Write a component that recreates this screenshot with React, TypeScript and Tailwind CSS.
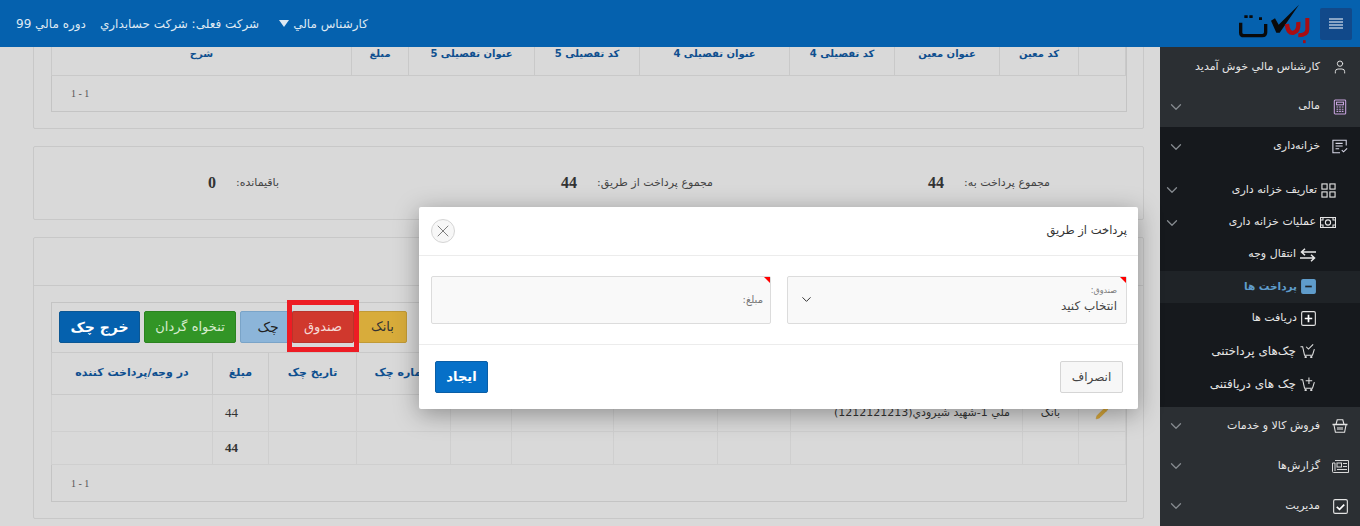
import React from "react";
import { User, ChevronDown, X, Pencil } from "lucide-react";

const fa = "font-['DejaVu_Sans','Liberation_Sans',sans-serif]";

function Logo() {
  return (
    <svg width="75" height="47" viewBox="30 0 225 141" fill="none" className="shrink-0">
      <path d="M47 68V98Q47 107 57 107H112Q122 107 122 97V72" stroke="#0a0a0a" strokeWidth="10" />
      <path d="M58 50h10M73 50h10M102 56h9" stroke="#0a0a0a" strokeWidth="8" />
      <path d="M138 62L150 55L161 74L222 14L164 98H154Z" fill="#0a0a0a" />
      <path d="M186 72Q188 102 206 98Q222 94 220 66" stroke="#a80d12" strokeWidth="13" />
      <path d="M247 54V88Q247 106 220 106" stroke="#a80d12" strokeWidth="12" />
      <path d="M234 125h8" stroke="#a80d12" strokeWidth="9" />
    </svg>
  );
}

const ic = "w-[16px] h-[16px] shrink-0";

function CalcIcon() {
  return (
    <svg viewBox="0 0 16 18" className="w-[14px] h-[16px] shrink-0" fill="none" stroke="#c9a4e0" strokeWidth="1.2">
      <rect x="1.5" y="1" width="13" height="16" rx="1" />
      <rect x="4" y="3.5" width="8" height="3" />
      <path d="M4 9h2M7 9h2M10 9h2M4 11.5h2M7 11.5h2M10 11.5h2M4 14h2M7 14h2M10 14h2" />
    </svg>
  );
}
function TreasuryIcon() {
  return (
    <svg viewBox="0 0 18 16" className="w-[16px] h-[15px] shrink-0" fill="none" stroke="#d8d8e8" strokeWidth="1.2">
      <path d="M16 7V1H1v14h8" />
      <path d="M4 4.5h8M4 7.5h8M4 10.5h4" />
      <path d="M11 12l2 2 4-4" />
    </svg>
  );
}
function GridIcon() {
  return (
    <svg viewBox="0 0 16 16" className="w-[15px] h-[15px] shrink-0" fill="none" stroke="#e4e4e4" strokeWidth="1.2">
      <rect x="1" y="1" width="5.5" height="5.5" />
      <rect x="9.5" y="1" width="5.5" height="5.5" />
      <rect x="1" y="9.5" width="5.5" height="5.5" />
      <rect x="9.5" y="9.5" width="5.5" height="5.5" />
    </svg>
  );
}
function MoneyIcon() {
  return (
    <svg viewBox="0 0 16 11" className="w-[16px] h-[11px] shrink-0" fill="none" stroke="#e4e4e4" strokeWidth="1.1">
      <rect x="0.5" y="0.5" width="15" height="10" />
      <circle cx="8" cy="5.5" r="2.6" />
      <path d="M1 3h2V1M13 1v2h2M1 8h2v2M13 10V8h2" />
    </svg>
  );
}
function SwapIcon() {
  return (
    <svg viewBox="0 0 16 14" className="w-[16px] h-[14px] shrink-0" fill="none" stroke="#e8e8e8" strokeWidth="1.5">
      <path d="M16 4H1.5M5 0.7L1.5 4L5 7.3" />
      <path d="M0 10H14.5M11 6.7L14.5 10L11 13.3" />
    </svg>
  );
}
function BoxIcon({ kind, active }: { kind: "minus" | "plus" | "check"; active?: boolean }) {
  const stroke = active ? "#5f9ccb" : "#e4e4e4";
  return (
    <svg viewBox="0 0 16 16" className="w-[15px] h-[15px] shrink-0" fill={active ? "#5f9ccb" : "none"} stroke={stroke} strokeWidth="1.2">
      <rect x="0.7" y="0.7" width="14.6" height="14.6" rx="1.5" />
      {kind === "minus" && <path d="M4.5 8h7" stroke="#1f2327" strokeWidth="1.8" />}
      {kind === "plus" && <path d="M4 8h8M8 4v8" stroke="#fff" strokeWidth="1.8" />}
      {kind === "check" && <path d="M4 8.5l3 2.5 5-5" stroke="#fff" strokeWidth="1.8" />}
    </svg>
  );
}
function CartIcon({ kind }: { kind: "check" | "plus" }) {
  return (
    <svg viewBox="0 0 17 16" className="w-[16px] h-[15px] shrink-0" fill="none" stroke="#e4e4e4" strokeWidth="1.1">
      <path d="M0.5 4h2.3l2 9h8.5l2-6.5" />
      <circle cx="6" cy="15" r="0.7" />
      <circle cx="12" cy="15" r="0.7" />
      {kind === "check" ? <path d="M6.5 4l2.5 2.5L14 1.5" /> : <path d="M6 5h7M9.5 1.5v7" />}
    </svg>
  );
}
function BasketIcon() {
  return (
    <svg viewBox="0 0 16 14" className="w-[16px] h-[14px] shrink-0" fill="none" stroke="#e4e4e4" strokeWidth="1.1">
      <path d="M4 5.5L5.2 0.8H10.8L12 5.5" />
      <path d="M0.5 5.5H15.5" strokeWidth="1.5" />
      <path d="M2 6L3.4 13.3H12.6L14 6" />
      <path d="M6 8v3M8 8v3M10 8v3" />
    </svg>
  );
}
function PaperIcon() {
  return (
    <svg viewBox="0 0 17 13" className="w-[17px] h-[13px] shrink-0" fill="none" stroke="#d8d8d8" strokeWidth="1">
      <path d="M3 0.5H16.5V12.5H1.5Q0.5 12.5 0.5 11.5V3H3V11" />
      <rect x="5" y="3" width="4.5" height="4" />
      <path d="M11 3.5h4M11 6.5h4M5 9.5h10" />
    </svg>
  );
}

function Chev() {
  return <ChevronDown className="w-[18px] h-[18px] text-[#858a8f] shrink-0" strokeWidth={1.7} />;
}

function TopRow({ icon, label, dark, h = "h-[40px]" }: { icon: React.ReactNode; label: string; dark?: boolean; h?: string }) {
  return (
    <div className={`${h} flex items-center pr-[12px] pl-[7px] gap-[12px] text-[11px] text-[#e6e6e6] ${dark ? "bg-[#16191d]" : ""}`}>
      <span className="w-[16px] flex justify-center">{icon}</span>
      <span className="flex-1">{label}</span>
      <Chev />
    </div>
  );
}

function SubRow({ icon, label, chevron, h = "h-[32px]" }: { icon: React.ReactNode; label: string; chevron?: boolean; h?: string }) {
  return (
    <div className={`${h} flex items-center pr-[24px] pl-[3px] gap-[4px] text-[11px] text-[#e6e6e6]`}>
      {icon}
      <span className="flex-1">{label}</span>
      {chevron && <Chev />}
    </div>
  );
}

function LeafRow({ icon, label, active, large, h = "h-[32px]" }: { icon: React.ReactNode; label: string; active?: boolean; large?: boolean; h?: string }) {
  return (
    <div className={`${h} flex items-center pr-[44px] gap-[4px] ${active ? "bg-[#1f2327] text-[#5f9ccb] font-bold text-[10.5px]" : large ? "text-[#e6e6e6] text-[12px]" : "text-[#e6e6e6] text-[11px]"}`}>
      {icon}
      <span>{label}</span>
    </div>
  );
}

function Sidebar() {
  return (
    <aside className="w-[200px] shrink-0 bg-[#2b2f33] flex flex-col overflow-hidden">
      <div className="h-[40px] flex items-center pr-[12px] gap-[12px] text-[11px] text-[#e6e6e6]">
        <User className={ic} strokeWidth={1.4} />
        <span>کارشناس مالي خوش آمدید</span>
      </div>
      <TopRow icon={<CalcIcon />} label="مالی" />
      <div className="bg-[#16191d] pb-[6px]">
        <TopRow icon={<TreasuryIcon />} label="خزانه‌داری" dark />
        <div className="pt-[7px]">
          <SubRow h="h-[33px]" icon={<GridIcon />} label="تعاریف خزانه داری" chevron />
          <SubRow icon={<MoneyIcon />} label="عملیات خزانه داری" chevron />
          <LeafRow icon={<SwapIcon />} label="انتقال وجه" />
          <LeafRow icon={<BoxIcon kind="minus" active />} label="پرداخت ها" active />
          <LeafRow icon={<BoxIcon kind="plus" />} label="دریافت ها" />
          <LeafRow large icon={<CartIcon kind="check" />} label="چک‌های پرداختنی" />
          <LeafRow large h="h-[34px]" icon={<CartIcon kind="plus" />} label="چک های دریافتنی" />
        </div>
      </div>
      <TopRow icon={<BasketIcon />} label="فروش کالا و خدمات" />
      <TopRow icon={<PaperIcon />} label="گزارش‌ها" />
      <TopRow icon={<BoxIcon kind="check" />} label="مدیریت" />
    </aside>
  );
}

function Header() {
  return (
    <header className="h-[47px] shrink-0 bg-[#0561ae] flex items-center pr-[8px] pl-[16px] text-[12px] text-[#dfe9f3]">
      <button className="w-[32px] h-[32px] rounded-[2px] bg-[#11498a] flex items-center justify-center">
        <svg width="14" height="11" viewBox="0 0 14 11" stroke="#fff" strokeWidth="1.1">
          <path d="M0 1h14M0 4h14M0 7h14M0 10h14" />
        </svg>
      </button>
      <div className="mr-[10px]"><Logo /></div>
      <div className="mr-auto flex items-center gap-[14px]">
        <span className="flex items-center gap-[4px]">
          کارشناس مالي
          <span className="w-0 h-0 border-l-[5px] border-r-[5px] border-t-[7px] border-l-transparent border-r-transparent border-t-[#dfe9f3]" />
        </span>
        <span className="mr-[6px]">شرکت فعلی: شرکت حسابداري</span>
        <span>دوره مالي 99</span>
      </div>
    </header>
  );
}

function Th({ children, size }: { children?: React.ReactNode; size: string }) {
  return <th className={`border border-[#c9c9c9] font-bold ${size} text-[#0e4f8f] text-center align-middle`}>{children}</th>;
}
function Pager() {
  return <div className="h-full flex items-center pl-[19px] font-['Liberation_Serif',serif] text-[10px] text-[#555]" dir="ltr"><span>1 - 1</span></div>;
}

function TopTable() {
  const heads = ["", "کد معین", "عنوان معین", "کد تفصیلی 4", "عنوان تفصیلی 4", "کد تفصیلی 5", "عنوان تفصیلی 5", "مبلغ", "شرح"];
  return (
    <div className="border border-[#c4c4c4]">
      <table className="w-full table-fixed border-collapse">
        <colgroup>
          <col className="w-[47px]" /><col className="w-[79px]" /><col className="w-[105px]" /><col className="w-[105px]" />
          <col className="w-[150px]" /><col className="w-[105px]" /><col className="w-[126px]" /><col className="w-[57px]" /><col className="w-[300px]" />
        </colgroup>
        <thead>
          <tr className="h-[44px]">{heads.map((h, i) => <Th key={i} size="text-[10px]">{h}</Th>)}</tr>
        </thead>
      </table>
      <div className="h-[35px]"><Pager /></div>
    </div>
  );
}

function Td({ children, amount, bold, right }: { children?: React.ReactNode; amount?: boolean; bold?: boolean; right?: boolean }) {
  return (
    <td className={`border border-[#cfcfcf] text-[#333] align-middle ${right ? "text-right pr-[12px] text-[11px]" : amount ? "text-left pl-[12px] text-[13px] font-['Liberation_Serif',serif]" : "text-center text-[11px]"} ${bold ? "font-bold" : ""}`}>
      {children}
    </td>
  );
}

function BottomTable() {
  const heads = ["", "", "", "", "", "", "", "شماره چک", "تاریخ چک", "مبلغ", "در وجه/پرداخت کننده"];
  return (
    <table className="w-full table-fixed border-collapse">
      <colgroup>
        <col className="w-[47px]" /><col className="w-[56px]" /><col className="w-[232px]" /><col className="w-[73px]" /><col className="w-[104px]" />
        <col className="w-[102px]" /><col className="w-[61px]" /><col className="w-[94px]" /><col className="w-[88px]" /><col className="w-[56px]" /><col className="w-[161px]" />
      </colgroup>
      <thead>
        <tr className="h-[42px]">{heads.map((h, i) => <Th key={i} size="text-[11px]">{h}</Th>)}</tr>
      </thead>
      <tbody>
        <tr className="h-[37px]">
          <Td><Pencil className="w-[14px] h-[14px] text-[#c9962a] mx-auto" fill="#d9a93a" strokeWidth={1} /></Td>
          <Td>بانک</Td>
          <Td right>ملي 1-شهيد شيرودي(1212121213)</Td>
          <Td /><Td /><Td /><Td /><Td /><Td />
          <Td amount>44</Td>
          <Td />
        </tr>
        <tr className="h-[33px]">
          <Td /><Td /><Td /><Td /><Td /><Td /><Td /><Td /><Td />
          <Td amount bold>44</Td>
          <Td />
        </tr>
      </tbody>
    </table>
  );
}

function Btn({ c, children }: { c: string; children: React.ReactNode }) {
  return <button className={`h-[32px] rounded-[2px] border ${c}`}>{children}</button>;
}

function Stat({ label, value, w }: { label: string; value: string; w: string }) {
  return (
    <div className={`${w} flex items-center gap-[20px]`}>
      <span className="text-[11px] text-[#444]">{label}</span>
      <span className="font-['Liberation_Serif',serif] font-bold text-[16px] text-[#333]">{value}</span>
    </div>
  );
}

function Main() {
  return (
    <main className="flex-1 overflow-hidden bg-[#d9d9d9]">
      <div className="-mt-[34px] mr-[16px] ml-[33px] flex flex-col gap-[17px]">
        <section className="border border-[#c8c8c8] rounded-[2px] pt-[16px] pb-[16px] pr-[16px] pl-[17px]"><TopTable /></section>
        <section className="h-[74px] border border-[#c8c8c8] rounded-[2px] flex items-center pr-[93px]">
          <Stat w="w-[337px]" label="مجموع پرداخت به:" value="44" />
          <Stat w="w-[434px]" label="مجموع پرداخت از طریق:" value="44" />
          <Stat w="w-[200px]" label="باقیمانده:" value="0" />
        </section>
        <section className="border border-[#c8c8c8] rounded-[2px]">
          <div className="h-[48px] border-b border-[#c8c8c8]" />
          <div className="pt-[16px] pb-[16px] pr-[16px] pl-[17px]">
            <div className="border border-[#c4c4c4]">
              <div className="h-[49px] flex items-center pl-[7px] gap-[4px] pb-[1px]" dir="ltr">
                <Btn c="w-[81px] bg-[#0561ae] border-[#0b5794] text-white font-bold text-[14px]">خرج چک</Btn>
                <Btn c="w-[92px] bg-[#329526] border-[#2b8320] text-[#d8ecd0] text-[13px]">تنخواه گردان</Btn>
                <Btn c="w-[56px] bg-[#8cb5d9] border-[#7aa4c8] text-[#222] text-[14px] -mr-[8px]">چک</Btn>
                <Btn c="w-[62px] bg-[#d0382d] border-[#b8342b] text-[#f5d9d5] text-[13px]">صندوق</Btn>
                <Btn c="w-[49px] bg-[#d8ac3b] border-[#c19a36] text-[#333] text-[13px]">بانک</Btn>
              </div>
              <BottomTable />
              <div className="h-[36px]"><Pager /></div>
            </div>
          </div>
        </section>
      </div>
    </main>
  );
}

function Field({ w, children }: { w: string; children: React.ReactNode }) {
  return (
    <div className={`${w} h-[48px] relative bg-[#f9f9f9] border border-[#dcdcdc] rounded-[2px]`}>
      <span className="absolute top-0 right-0 w-0 h-0 border-b-[6px] border-b-transparent border-r-[6px] border-r-[#f00]" />
      {children}
    </div>
  );
}

function Modal() {
  return (
    <div className="absolute left-[419px] top-[207px] w-[719px] h-[202px] bg-white rounded-[2px] shadow-[0_5px_25px_rgba(0,0,0,0.35)] flex flex-col text-[#444]">
      <div className="h-[49px] border-b border-[#ececec] flex items-center justify-between pr-[11px] pl-[12px]">
        <span className="text-[11.5px] text-[#333]">پرداخت از طریق</span>
        <button className="w-[24px] h-[24px] rounded-full border border-[#d5d5d5] bg-[#f7f7f7] flex items-center justify-center">
          <X className="w-[20px] h-[20px] text-[#666]" strokeWidth={1} />
        </button>
      </div>
      <div className="h-[89px] border-b border-[#ececec] flex items-center justify-between pr-[11px] pl-[12px] pb-[1px]">
        <Field w="w-[340px]">
          <div className="h-full flex items-center justify-between pr-[9px] pl-[11px]">
            <div className="flex flex-col">
              <span className="text-[8px] text-[#777]">صندوق:</span>
              <span className="text-[12px] text-[#444]">انتخاب کنید</span>
            </div>
            <ChevronDown className="w-[15px] h-[15px] text-[#333]" strokeWidth={1.6} />
          </div>
        </Field>
        <Field w="w-[340px]">
          <div className="h-full flex items-center pr-[7px] text-[10px] text-[#777]">مبلغ:</div>
        </Field>
      </div>
      <div className="flex-1 flex items-center justify-between pr-[15px] pl-[16px]">
        <button className="w-[63px] h-[32px] bg-[#f7f7f7] border border-[#d5d5d5] rounded-[2px] text-[12px] text-[#444]">انصراف</button>
        <button className="w-[53px] h-[32px] bg-[#0670c8] border border-[#0a5ea6] rounded-[2px] text-[13px] font-bold text-white">ایجاد</button>
      </div>
    </div>
  );
}

export default function App() {
  return (
    <div dir="rtl" className={`relative w-[1360px] h-[526px] overflow-hidden flex flex-col ${fa}`}>
      <Header />
      <div className="flex-1 flex min-h-0">
        <Sidebar />
        <Main />
      </div>
      <Modal />
      <div className="absolute left-[287px] top-[300px] w-[72px] h-[52px] border-[5px] border-[#ed1c24]" />
    </div>
  );
}
